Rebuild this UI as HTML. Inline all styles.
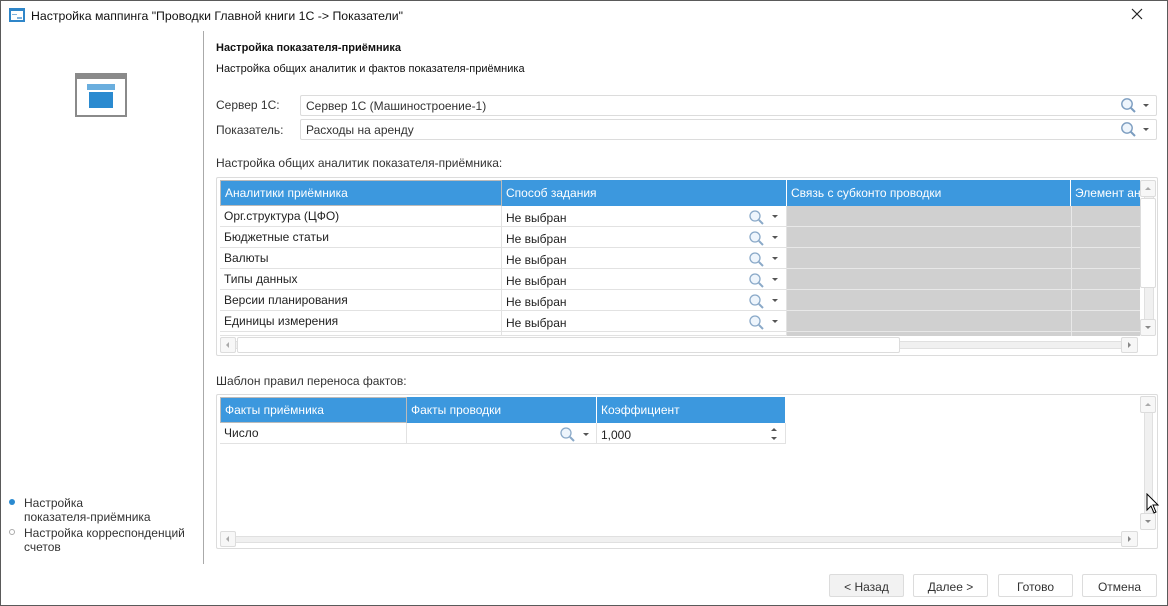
<!DOCTYPE html>
<html><head><meta charset="utf-8">
<style>
*{box-sizing:border-box;margin:0;padding:0}
body{width:1168px;height:606px;background:#fff;font-family:"Liberation Sans",sans-serif;font-size:12px;color:#222;position:relative;overflow:hidden}
.a{position:absolute}
.win{left:0;top:0;width:1168px;height:606px;border:1px solid #5a5a5a}
.t{white-space:nowrap}
.fld{border:1px solid #dcdcdc;border-radius:2px;background:#fff;height:21px;padding:3px 0 0 5px;color:#333}
.hdr{background:#3c98de;color:#fff;height:26px;padding:6px 0 0 4px;border-right:1px solid #fff;white-space:nowrap;overflow:hidden}
.cell{height:21px;border-bottom:1px solid #e2e2e2;border-right:1px solid #e2e2e2;padding:3px 0 0 4px;white-space:nowrap;overflow:hidden}
.g{background:#d0d0d0}
.btn{border:1px solid #dcdcdc;border-radius:2px;background:#fff;height:23px;text-align:center;padding-top:5px;color:#333}
.sb{background:#f0f0f0;border:1px solid #e0e0e0;border-radius:2px}
.sbb{background:#f7f7f7;border:1px solid #dcdcdc;border-radius:2px}
.arr{width:0;height:0;border-left:3px solid transparent;border-right:3px solid transparent;border-top:3px solid #555}
.up{width:0;height:0;border-left:3px solid transparent;border-right:3px solid transparent;border-bottom:3px solid #aaa}
.dn{width:0;height:0;border-left:3px solid transparent;border-right:3px solid transparent;border-top:3px solid #888}
.lt{width:0;height:0;border-top:3px solid transparent;border-bottom:3px solid transparent;border-right:3px solid #aaa}
.rt{width:0;height:0;border-top:3px solid transparent;border-bottom:3px solid transparent;border-left:3px solid #888}
</style></head><body>
<div class="a win"></div>
<div class="a" style="left:9px;top:8px;width:16px;height:14px;border:2px solid #2f86c9;background:#fff"></div>
<div class="a" style="left:9px;top:8px;width:16px;height:3px;background:#2f86c9"></div>
<div class="a" style="left:12px;top:14px;width:5px;height:1px;background:#7fb2dc"></div>
<div class="a" style="left:17px;top:17px;width:5px;height:2px;border:1px solid #7fb2dc"></div>
<div class="a t" style="left:31px;top:9px;font-size:12.3px;color:#111">Настройка маппинга "Проводки Главной книги 1С -&gt; Показатели"</div>
<svg class="a" style="left:1131px;top:8px" width="12" height="12"><path d="M1 1L11 11M11 1L1 11" stroke="#222" stroke-width="1.2"/></svg>
<div class="a" style="left:203px;top:31px;width:1px;height:533px;background:#aaa"></div>
<div class="a" style="left:75px;top:73px;width:52px;height:44px;border:2px solid #8a8a8a;border-top-width:6px;background:#fff"></div>
<div class="a" style="left:87px;top:84px;width:28px;height:6px;background:#6aaede"></div>
<div class="a" style="left:89px;top:92px;width:24px;height:16px;background:#2a8ad0"></div>
<div class="a" style="left:9px;top:499px;width:6px;height:6px;border-radius:3px;background:#2a8ad0"></div>
<div class="a t" style="left:24px;top:496px;color:#333;line-height:14px">Настройка<br>показателя-приёмника</div>
<div class="a" style="left:9px;top:529px;width:6px;height:6px;border-radius:3px;border:1px solid #aaa"></div>
<div class="a t" style="left:24px;top:526px;color:#333;line-height:14px">Настройка корреспонденций<br>счетов</div>
<div class="a t" style="left:216px;top:42px;font-weight:bold;font-size:11px;color:#111">Настройка показателя-приёмника</div>
<div class="a t" style="left:216px;top:63px;font-size:11px;color:#111">Настройка общих аналитик и фактов показателя-приёмника</div>
<div class="a t" style="left:216px;top:98px;color:#333">Сервер 1С:</div>
<div class="a fld" style="left:300px;top:95px;width:857px">Сервер 1С (Машиностроение-1)</div>
<div class="a t" style="left:216px;top:123px;color:#333">Показатель:</div>
<div class="a fld" style="left:300px;top:119px;width:857px">Расходы на аренду</div>
<svg class="a" style="left:1120px;top:97px" width="18" height="18"><circle cx="7" cy="7" r="5.2" fill="#eef5fc" stroke="#7c9dc0" stroke-width="1.4"/><path d="M11 11L15 15" stroke="#7c9dc0" stroke-width="2"/></svg>
<div class="a arr" style="left:1143px;top:104px"></div>
<svg class="a" style="left:1120px;top:121px" width="18" height="18"><circle cx="7" cy="7" r="5.2" fill="#eef5fc" stroke="#7c9dc0" stroke-width="1.4"/><path d="M11 11L15 15" stroke="#7c9dc0" stroke-width="2"/></svg>
<div class="a arr" style="left:1143px;top:128px"></div>
<div class="a t" style="left:216px;top:156px;color:#333">Настройка общих аналитик показателя-приёмника:</div>
<div class="a" style="left:216px;top:177px;width:942px;height:179px;border:1px solid #dcdcdc;border-radius:2px"></div>
<div class="a hdr" style="left:220px;top:180px;width:282px;border:1px solid #bbb;padding-top:5px">Аналитики приёмника</div>
<div class="a hdr" style="left:502px;top:180px;width:285px">Способ задания</div>
<div class="a hdr" style="left:787px;top:180px;width:284px">Связь с субконто проводки</div>
<div class="a hdr" style="left:1071px;top:180px;width:69px;border-right:0">Элемент ана</div>
<div class="a cell" style="left:220px;top:206px;width:282px">Орг.структура (ЦФО)</div>
<div class="a cell" style="left:220px;top:227px;width:282px">Бюджетные статьи</div>
<div class="a cell" style="left:220px;top:248px;width:282px">Валюты</div>
<div class="a cell" style="left:220px;top:269px;width:282px">Типы данных</div>
<div class="a cell" style="left:220px;top:290px;width:282px">Версии планирования</div>
<div class="a cell" style="left:220px;top:311px;width:282px">Единицы измерения</div>
<div class="a cell" style="left:220px;top:332px;width:282px;height:4px"></div>
<div class="a cell" style="left:502px;top:206px;width:285px;padding-top:5px">Не выбран</div>
<div class="a cell" style="left:502px;top:227px;width:285px;padding-top:5px">Не выбран</div>
<div class="a cell" style="left:502px;top:248px;width:285px;padding-top:5px">Не выбран</div>
<div class="a cell" style="left:502px;top:269px;width:285px;padding-top:5px">Не выбран</div>
<div class="a cell" style="left:502px;top:290px;width:285px;padding-top:5px">Не выбран</div>
<div class="a cell" style="left:502px;top:311px;width:285px;padding-top:5px">Не выбран</div>
<div class="a cell" style="left:502px;top:332px;width:285px;height:4px"></div>
<div class="a g" style="left:787px;top:206px;width:284px;height:130px"></div>
<div class="a g" style="left:1071px;top:206px;width:69px;height:130px;border-left:1px solid #e8e8e8"></div>
<div class="a" style="left:787px;top:226px;width:353px;height:1px;background:#e8e8e8"></div>
<div class="a" style="left:787px;top:247px;width:353px;height:1px;background:#e8e8e8"></div>
<div class="a" style="left:787px;top:268px;width:353px;height:1px;background:#e8e8e8"></div>
<div class="a" style="left:787px;top:289px;width:353px;height:1px;background:#e8e8e8"></div>
<div class="a" style="left:787px;top:310px;width:353px;height:1px;background:#e8e8e8"></div>
<div class="a" style="left:787px;top:331px;width:353px;height:1px;background:#e8e8e8"></div>
<svg class="a" style="left:748px;top:208px" width="18" height="124">
<g fill="#eef5fc" stroke="#8aa9c8"><circle cx="7" cy="8" r="5" stroke-width="1.3"/><circle cx="7" cy="29" r="5" stroke-width="1.3"/><circle cx="7" cy="50" r="5" stroke-width="1.3"/><circle cx="7" cy="71" r="5" stroke-width="1.3"/><circle cx="7" cy="92" r="5" stroke-width="1.3"/><circle cx="7" cy="113" r="5" stroke-width="1.3"/></g>
<g stroke="#8aa9c8" stroke-width="2"><path d="M11 12L15 16M11 33L15 37M11 54L15 58M11 75L15 79M11 96L15 100M11 117L15 121"/></g></svg>
<div class="a arr" style="left:772px;top:215px"></div><div class="a arr" style="left:772px;top:236px"></div><div class="a arr" style="left:772px;top:257px"></div><div class="a arr" style="left:772px;top:278px"></div><div class="a arr" style="left:772px;top:299px"></div><div class="a arr" style="left:772px;top:320px"></div>
<div class="a sb" style="left:1144px;top:180px;width:10px;height:156px"></div>
<div class="a sbb" style="left:1140px;top:180px;width:16px;height:17px"></div><div class="a up" style="left:1145px;top:187px"></div>
<div class="a" style="left:1140px;top:198px;width:16px;height:90px;background:#fff;border:1px solid #dcdcdc;border-radius:2px"></div>
<div class="a sbb" style="left:1140px;top:319px;width:16px;height:17px"></div><div class="a dn" style="left:1145px;top:326px"></div>
<div class="a sb" style="left:220px;top:341px;width:918px;height:8px"></div>
<div class="a sbb" style="left:220px;top:337px;width:16px;height:16px"></div><div class="a lt" style="left:226px;top:342px"></div>
<div class="a" style="left:237px;top:337px;width:663px;height:16px;background:#fff;border:1px solid #dcdcdc;border-radius:2px"></div>
<div class="a sbb" style="left:1121px;top:337px;width:17px;height:16px"></div><div class="a rt" style="left:1128px;top:342px"></div>
<div class="a t" style="left:216px;top:374px;color:#333">Шаблон правил переноса фактов:</div>
<div class="a" style="left:216px;top:394px;width:942px;height:155px;border:1px solid #dcdcdc;border-radius:2px"></div>
<div class="a hdr" style="left:220px;top:397px;width:187px;border:1px solid #bbb;padding-top:5px">Факты приёмника</div>
<div class="a hdr" style="left:407px;top:397px;width:190px">Факты проводки</div>
<div class="a hdr" style="left:597px;top:397px;width:188px;border-right:0">Коэффициент</div>
<div class="a cell" style="left:220px;top:423px;width:187px">Число</div>
<div class="a cell" style="left:407px;top:423px;width:190px"></div>
<div class="a cell" style="left:597px;top:423px;width:189px;padding-top:5px">1,000</div>
<svg class="a" style="left:559px;top:426px" width="18" height="18"><circle cx="7" cy="7" r="5" fill="#eef5fc" stroke="#8aa9c8" stroke-width="1.3"/><path d="M11 11L15 15" stroke="#8aa9c8" stroke-width="2"/></svg>
<div class="a arr" style="left:583px;top:433px"></div>
<div class="a" style="left:771px;top:428px;width:0;height:0;border-left:3px solid transparent;border-right:3px solid transparent;border-bottom:3px solid #555"></div>
<div class="a arr" style="left:771px;top:437px"></div>
<div class="a sb" style="left:1144px;top:397px;width:9px;height:133px"></div>
<div class="a sbb" style="left:1140px;top:396px;width:16px;height:17px"></div><div class="a up" style="left:1145px;top:403px"></div>
<div class="a sbb" style="left:1140px;top:513px;width:16px;height:17px"></div><div class="a dn" style="left:1145px;top:520px"></div>
<div class="a sb" style="left:220px;top:536px;width:918px;height:7px"></div>
<div class="a sbb" style="left:220px;top:531px;width:16px;height:16px"></div><div class="a lt" style="left:226px;top:536px"></div>
<div class="a sbb" style="left:1121px;top:531px;width:17px;height:16px"></div><div class="a rt" style="left:1128px;top:536px"></div>
<svg class="a" style="left:1146px;top:493px" width="14" height="22"><path d="M1 1L1 17L5 13L8 20L10 19L7 12L12 12Z" fill="#fff" stroke="#000"/></svg>
<div class="a btn" style="left:829px;top:574px;width:75px;background:#f2f2f2">&lt; Назад</div>
<div class="a btn" style="left:913px;top:574px;width:75px">Далее &gt;</div>
<div class="a btn" style="left:998px;top:574px;width:75px">Готово</div>
<div class="a btn" style="left:1082px;top:574px;width:75px">Отмена</div>
</body></html>
